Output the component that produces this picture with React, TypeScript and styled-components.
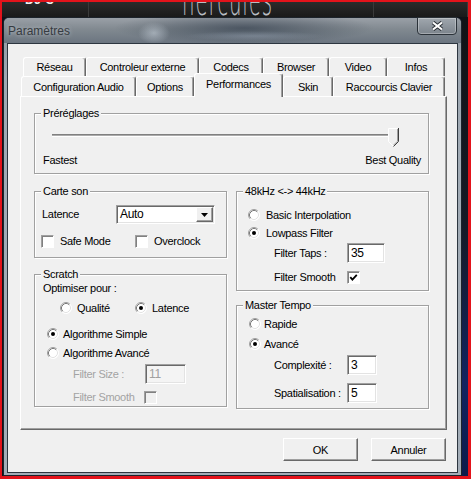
import React from 'react';
import styled, { createGlobalStyle } from 'styled-components';

const GlobalStyle = createGlobalStyle`
  html, body {
    margin: 0;
    padding: 0;
    background: #e3131b;
  }
  body {
    font-family: "Liberation Sans", Arial, sans-serif;
    font-size: 11px;
    letter-spacing: -0.3px;
    color: #000;
  }
`;

const Screen = styled.div`
  box-sizing: border-box;
  width: 471px;
  height: 479px;
  border-style: solid;
  border-color: #e3131b;
  border-width: 2px 3px 3px 2px;
  background: #0e121a;
  display: flex;
  flex-direction: column;
  overflow: hidden;
`;

/* the app behind the dialog */
const TopStrip = styled.div`
  flex: none;
  height: 15px;
  display: flex;
  background: linear-gradient(180deg, #2b2b2b, #1a1a1a);
  overflow: hidden;
`;

const StripCell = styled.div<{ $w?: number; $pl?: number }>`
  flex: ${p => (p.$w ? `0 0 ${p.$w}px` : '1')};
  box-sizing: border-box;
  padding-left: ${p => p.$pl ?? 0}px;
  border-right: 1px solid #3a3a3a;
  overflow: hidden;
`;

const BrandText = styled.div`
  margin-top: -9px;
  color: #f0f0f0;
  font-weight: bold;
  font-size: 12px;
  letter-spacing: 0.5px;
`;

const Logo = styled.div`
  margin-top: -24px;
  font-family: "DejaVu Sans", sans-serif;
  font-weight: 200;
  font-size: 44px;
  line-height: 44px;
  letter-spacing: 2px;
  color: #b9bdc3;
  transform: scaleX(0.45);
  transform-origin: left top;
  white-space: nowrap;
`;

const Desk = styled.div`
  flex: 1;
  display: flex;
  min-height: 0;
`;

const SideStrip = styled.div`
  flex: 1;
  background: linear-gradient(180deg, #111316 0%, #151a26 45%, #122460 80%, #0c1b4a 100%);
`;

const Dialog = styled.div`
  box-sizing: border-box;
  width: 459px;
  margin-left: 1px;
  border: 1px solid #1c232b;
  border-radius: 6px 6px 0 0;
  background: linear-gradient(180deg, #8e969e 0px, #9fa9b3 60px, #a3adb7 100%);
  display: flex;
  flex-direction: column;
`;

const TitleBar = styled.div`
  flex: none;
  height: 25px;
  display: flex;
  align-items: center;
  justify-content: space-between;
  padding-left: 4px;
  border-radius: 5px 5px 0 0;
  background:
    radial-gradient(ellipse 16px 11px at 150px 15px, rgba(205, 214, 224, 0.55), rgba(205, 214, 224, 0)),
    radial-gradient(ellipse 70px 5px at 250px 18px, rgba(150, 162, 178, 0.45), rgba(150, 162, 178, 0)),
    radial-gradient(ellipse 130px 16px at 240px 10px, rgba(30, 42, 58, 0.55), rgba(30, 42, 58, 0)),
    linear-gradient(180deg, #9aa0a7 0%, #818990 45%, #6b7580 100%);
`;

const Title = styled.span`
  font-size: 12px;
  letter-spacing: 0;
  color: #363b41;
  text-shadow: 0 0 4px rgba(225, 230, 236, 0.7);
`;

const CloseButton = styled.div`
  align-self: flex-start;
  box-sizing: border-box;
  width: 40px;
  height: 18px;
  margin: -1px 4px 0 0;
  border: 1px solid #2b3239;
  border-radius: 0 0 4px 4px;
  box-shadow: inset 0 0 0 1px rgba(255, 255, 255, 0.3);
  background: linear-gradient(180deg, #a0a7ae, #7c848c);
  display: flex;
  align-items: center;
  justify-content: center;
`;

const Client = styled.div`
  flex: 1;
  margin: 0 3px 2px 3px;
  border: 1px solid #2d3640;
  background: #f0f0f0;
  padding: 13px 0 0 12px;
`;

const TabRow = styled.div<{ $indent: number; $h: number }>`
  display: flex;
  align-items: flex-end;
  height: ${p => p.$h}px;
  margin-left: ${p => p.$indent}px;
`;

const Tab = styled.div<{ $w: number; $active?: boolean }>`
  box-sizing: border-box;
  flex: 0 0 ${p => p.$w}px;
  height: ${p => (p.$active ? '24px' : '100%')};
  margin-bottom: ${p => (p.$active ? -1 : 0)}px;
  position: relative;
  z-index: ${p => (p.$active ? 2 : 0)};
  border-top: 1px solid #fff;
  border-left: 1px solid #fff;
  border-right: 1px solid #696969;
  border-radius: 3px 3px 0 0;
  box-shadow: inset -1px 0 0 #a0a0a0;
  background: #f0f0f0;
  display: flex;
  align-items: center;
  justify-content: center;
  padding-bottom: ${p => (p.$active ? 3 : 0)}px;
  white-space: nowrap;
`;

const Panel = styled.div`
  box-sizing: border-box;
  width: 427px;
  height: 334px;
  border: 1px solid;
  border-color: #fff #696969 #696969 #fff;
  box-shadow: inset -1px -1px 0 #a0a0a0;
  padding: 16px 0 0 13px;
`;

const GroupBox = styled.div<{ $w: number; $h: number }>`
  box-sizing: border-box;
  width: ${p => p.$w}px;
  height: ${p => p.$h}px;
  border: 1px solid #a0a0a0;
  box-shadow: inset 1px 1px 0 #fff, 1px 1px 0 #fff;
  display: flex;
  flex-direction: column;
  align-items: flex-start;
`;

const Legend = styled.div`
  margin: -7px 0 0 6px;
  padding: 0 2px;
  height: 13px;
  line-height: 13px;
  background: #f0f0f0;
  white-space: nowrap;
`;

const Columns = styled.div`
  display: flex;
  gap: 9px;
  margin-top: 17px;
`;

const Column = styled.div<{ $gap: number }>`
  display: flex;
  flex-direction: column;
  gap: ${p => p.$gap}px;
`;

const Row = styled.div<{ $mt: number; $pl: number; $h?: number }>`
  display: flex;
  align-items: center;
  margin-top: ${p => p.$mt}px;
  padding-left: ${p => p.$pl}px;
  height: ${p => p.$h ?? 13}px;
  line-height: 13px;
  white-space: nowrap;
`;

const Label = styled.span<{ $w?: number; $disabled?: boolean }>`
  display: inline-block;
  width: ${p => (p.$w ? `${p.$w}px` : 'auto')};
  color: ${p => (p.$disabled ? '#a3a3a3' : '#000')};
`;

const Option = styled.div<{ $w?: number; $gap: number }>`
  display: flex;
  align-items: center;
  gap: ${p => p.$gap}px;
  width: ${p => (p.$w ? `${p.$w}px` : 'auto')};
`;

const SliderRow = styled.div`
  display: flex;
  align-items: flex-start;
  height: 19px;
  margin-top: 8px;
  padding-left: 17px;
`;

const Track = styled.div`
  width: 344px;
  height: 1px;
  margin-top: 6px;
  border-top: 1px solid #808080;
  border-bottom: 1px solid #fff;
  background: #ababab;
`;

const Thumb = styled.svg`
  flex: none;
  margin-left: -8px;
`;

const ScaleRow = styled.div`
  align-self: stretch;
  display: flex;
  justify-content: space-between;
  margin-top: 7px;
  padding: 0 7px 0 8px;
  line-height: 13px;
`;

const ComboBox = styled.div`
  box-sizing: border-box;
  width: 99px;
  height: 19px;
  border: 1px solid;
  border-color: #a0a0a0 #fff #fff #a0a0a0;
  box-shadow: inset 1px 1px 0 #696969, inset -1px -1px 0 #e3e3e3;
  background: #fff;
  display: flex;
  align-items: center;
  justify-content: space-between;
  padding: 0 1px 0 3px;
  font-size: 12px;
`;

const ComboArrow = styled.div`
  box-sizing: border-box;
  width: 17px;
  height: 15px;
  border: 1px solid;
  border-color: #fff #696969 #696969 #fff;
  box-shadow: inset -1px -1px 0 #a0a0a0;
  background: #f0f0f0;
  display: flex;
  align-items: center;
  justify-content: center;
`;

const Box = styled.span<{ $disabled?: boolean }>`
  box-sizing: border-box;
  flex: none;
  width: 13px;
  height: 13px;
  border: 1px solid;
  border-color: #a0a0a0 #fff #fff #a0a0a0;
  box-shadow: inset 1px 1px 0 #808080;
  background: ${p => (p.$disabled ? '#f0f0f0' : '#fff')};
  display: flex;
  align-items: center;
  justify-content: center;
`;

const Field = styled.div<{ $w: number; $disabled?: boolean }>`
  box-sizing: border-box;
  width: ${p => p.$w}px;
  height: 20px;
  border: 1px solid;
  border-color: #a0a0a0 #fff #fff #a0a0a0;
  box-shadow: inset 1px 1px 0 #696969, inset -1px -1px 0 #e3e3e3;
  background: ${p => (p.$disabled ? '#f4f4f4' : '#fff')};
  color: ${p => (p.$disabled ? '#a0a0a0' : '#000')};
  font-size: 12px;
  line-height: 14px;
  padding: 2px 0 0 3px;
`;

const ButtonBar = styled.div`
  width: 427px;
  box-sizing: border-box;
  display: flex;
  justify-content: flex-end;
  gap: 13px;
  margin-top: 8px;
  padding-right: 1px;
`;

const PushButton = styled.div`
  box-sizing: border-box;
  width: 75px;
  height: 23px;
  border: 1px solid;
  border-color: #fff #696969 #696969 #fff;
  box-shadow: inset -1px -1px 0 #a0a0a0;
  background: #f0f0f0;
  display: flex;
  align-items: center;
  justify-content: center;
`;

const Radio: React.FC<{ on?: boolean }> = ({ on }) => (
  <svg width="12" height="12" viewBox="0 0 12 12" style={{ flex: 'none' }}>
    <circle cx="6" cy="6" r="5.5" fill="#fff" />
    <path d="M2.11 9.89A5.5 5.5 0 0 1 9.89 2.11" fill="none" stroke="#a0a0a0" />
    <path d="M9.89 2.11A5.5 5.5 0 0 1 2.11 9.89" fill="none" stroke="#fff" />
    <path d="M2.82 9.18A4.5 4.5 0 0 1 9.18 2.82" fill="none" stroke="#7a7a7a" />
    <path d="M9.18 2.82A4.5 4.5 0 0 1 2.82 9.18" fill="none" stroke="#e3e3e3" />
    {on && <circle cx="6" cy="6" r="2" fill="#000" />}
  </svg>
);

const CheckBox: React.FC<{ checked?: boolean; disabled?: boolean }> = ({ checked, disabled }) => (
  <Box $disabled={disabled}>
    {checked && (
      <svg width="9" height="9" viewBox="0 0 9 9">
        <path d="M1.3 4.2L3.4 6.6L7.8 1.8" fill="none" stroke="#000" strokeWidth="1.8" />
      </svg>
    )}
  </Box>
);

const SliderThumb = () => (
  <Thumb width="11" height="19" viewBox="0 0 11 19">
    <path d="M0.5 0.5H10.5V13.5L5.5 18.5L0.5 13.5Z" fill="#f0f0f0" />
    <path d="M0.5 13.5V0.5H9.5" fill="none" stroke="#fff" />
    <path d="M10.5 0V13.5L5.5 18.5" fill="none" stroke="#404040" />
    <path d="M9.5 1V13.2L5.5 17.2" fill="none" stroke="#a0a0a0" />
    <path d="M0.5 13.5L5 18" fill="none" stroke="#fff" />
  </Thumb>
);

const App: React.FC = () => (
  <>
    <GlobalStyle />
    <Screen>
      <TopStrip>
        <StripCell $w={87} $pl={23}>
          <BrandText>DJ C</BrandText>
        </StripCell>
        <StripCell $w={285} $pl={93}>
          <Logo>hercules</Logo>
        </StripCell>
        <StripCell />
      </TopStrip>

      <Desk>
        <Dialog>
          <TitleBar>
            <Title>Paramètres</Title>
            <CloseButton>
              <svg width="13" height="10" viewBox="0 0 13 10">
                <path d="M2 1.5L11 8.5M11 1.5L2 8.5" stroke="#2a2f35" strokeWidth="4" />
                <path d="M2 1.5L11 8.5M11 1.5L2 8.5" stroke="#fff" strokeWidth="2.2" />
              </svg>
            </CloseButton>
          </TitleBar>

          <Client>
            <TabRow $indent={3} $h={19}>
              <Tab $w={63}>Réseau</Tab>
              <Tab $w={113}>Controleur externe</Tab>
              <Tab $w={64}>Codecs</Tab>
              <Tab $w={66}>Browser</Tab>
              <Tab $w={58}>Video</Tab>
              <Tab $w={58}>Infos</Tab>
            </TabRow>
            <TabRow $indent={1} $h={20}>
              <Tab $w={115}>Configuration Audio</Tab>
              <Tab $w={58}>Options</Tab>
              <Tab $w={89} $active>Performances</Tab>
              <Tab $w={50}>Skin</Tab>
              <Tab $w={112}>Raccourcis Clavier</Tab>
            </TabRow>

            <Panel>
              <GroupBox $w={395} $h={61}>
                <Legend>Préréglages</Legend>
                <SliderRow>
                  <Track />
                  <SliderThumb />
                </SliderRow>
                <ScaleRow>
                  <span>Fastest</span>
                  <span>Best Quality</span>
                </ScaleRow>
              </GroupBox>

              <Columns>
                <Column $gap={16}>
                  <GroupBox $w={193} $h={67}>
                    <Legend>Carte son</Legend>
                    <Row $mt={7} $pl={7} $h={19}>
                      <Label $w={74}>Latence</Label>
                      <ComboBox>
                        <span>Auto</span>
                        <ComboArrow>
                          <svg width="7" height="4" viewBox="0 0 7 4">
                            <path d="M0 0H7L3.5 4Z" fill="#000" />
                          </svg>
                        </ComboArrow>
                      </ComboBox>
                    </Row>
                    <Row $mt={11} $pl={6}>
                      <Option $w={94} $gap={6}>
                        <CheckBox />
                        <span>Safe Mode</span>
                      </Option>
                      <Option $gap={6}>
                        <CheckBox />
                        <span>Overclock</span>
                      </Option>
                    </Row>
                  </GroupBox>

                  <GroupBox $w={193} $h={133}>
                    <Legend>Scratch</Legend>
                    <Row $mt={1} $pl={8}>Optimiser pour :</Row>
                    <Row $mt={7} $pl={25} $h={12}>
                      <Option $w={75} $gap={5}>
                        <Radio />
                        <span>Qualité</span>
                      </Option>
                      <Option $gap={5}>
                        <Radio on />
                        <span>Latence</span>
                      </Option>
                    </Row>
                    <Row $mt={14} $pl={12} $h={12}>
                      <Option $gap={4}>
                        <Radio on />
                        <span>Algorithme Simple</span>
                      </Option>
                    </Row>
                    <Row $mt={7} $pl={12} $h={12}>
                      <Option $gap={4}>
                        <Radio />
                        <span>Algorithme Avancé</span>
                      </Option>
                    </Row>
                    <Row $mt={5} $pl={38} $h={20}>
                      <Label $w={72} $disabled>Filter Size :</Label>
                      <Field $w={41} $disabled>11</Field>
                    </Row>
                    <Row $mt={7} $pl={38}>
                      <Label $w={71} $disabled>Filter Smooth</Label>
                      <CheckBox disabled />
                    </Row>
                  </GroupBox>
                </Column>

                <Column $gap={14}>
                  <GroupBox $w={193} $h={100}>
                    <Legend>48kHz &lt;-&gt; 44kHz</Legend>
                    <Row $mt={11} $pl={11} $h={12}>
                      <Option $gap={6}>
                        <Radio />
                        <span>Basic Interpolation</span>
                      </Option>
                    </Row>
                    <Row $mt={6} $pl={11} $h={12}>
                      <Option $gap={6}>
                        <Radio on />
                        <span>Lowpass Filter</span>
                      </Option>
                    </Row>
                    <Row $mt={4} $pl={37} $h={20}>
                      <Label $w={73}>Filter Taps :</Label>
                      <Field $w={38}>35</Field>
                    </Row>
                    <Row $mt={8} $pl={37}>
                      <Label $w={73}>Filter Smooth</Label>
                      <CheckBox checked />
                    </Row>
                  </GroupBox>

                  <GroupBox $w={193} $h={104}>
                    <Legend>Master Tempo</Legend>
                    <Row $mt={6} $pl={12} $h={12}>
                      <Option $gap={3}>
                        <Radio />
                        <span>Rapide</span>
                      </Option>
                    </Row>
                    <Row $mt={8} $pl={12} $h={12}>
                      <Option $gap={3}>
                        <Radio on />
                        <span>Avancé</span>
                      </Option>
                    </Row>
                    <Row $mt={5} $pl={37} $h={20}>
                      <Label $w={73}>Complexité :</Label>
                      <Field $w={30}>3</Field>
                    </Row>
                    <Row $mt={8} $pl={37} $h={20}>
                      <Label $w={73}>Spatialisation :</Label>
                      <Field $w={30}>5</Field>
                    </Row>
                  </GroupBox>
                </Column>
              </Columns>
            </Panel>

            <ButtonBar>
              <PushButton>OK</PushButton>
              <PushButton>Annuler</PushButton>
            </ButtonBar>
          </Client>
        </Dialog>
        <SideStrip />
      </Desk>
    </Screen>
  </>
);

export default App;
